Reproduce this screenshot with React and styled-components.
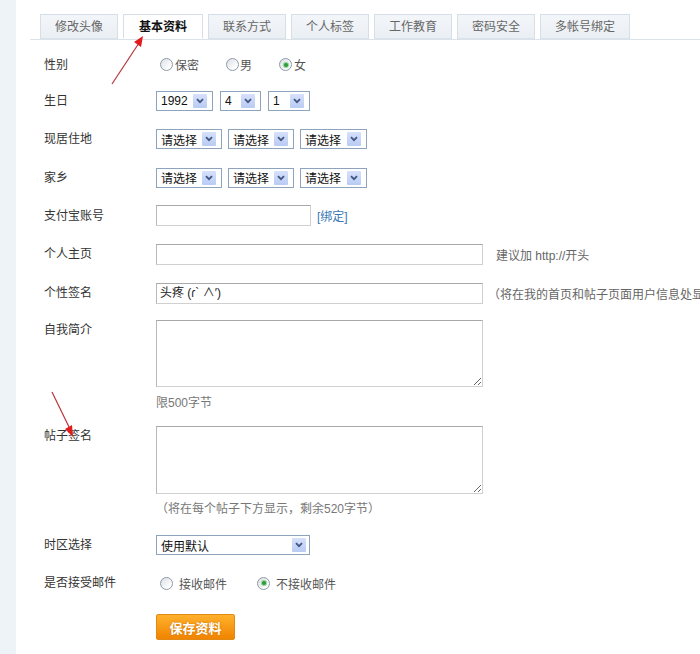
import styled, { createGlobalStyle } from 'styled-components';

const Global = createGlobalStyle`
  html, body {
    margin: 0;
    padding: 0;
    background: #fff;
    overflow: hidden;
  }
  body {
    font-family: "Liberation Sans", "Noto Sans CJK SC", sans-serif;
    font-size: 12px;
    color: #333;
  }
`;

const Page = styled.div`
  position: relative;
  display: flex;
  width: 700px;
  min-height: 654px;
`;

const SideStrip = styled.div`
  width: 16px;
  flex: none;
  background: #eef3f8;
`;

const Main = styled.div`
  flex: 1;
  padding-left: 14px;
  min-width: 0;
`;

const TabBar = styled.div`
  display: flex;
  gap: 5px;
  margin-top: 14px;
  padding-left: 10px;
  border-bottom: 1px solid #dbe3ea;
  height: 25px;
`;

const Tab = styled.div`
  height: 25px;
  box-sizing: border-box;
  padding: 0 ${p => (p.$active ? 15 : 14)}px;
  line-height: 24px;
  border: 1px solid #d6dfe7;
  border-bottom: ${p => (p.$active ? '1px solid #fff' : '1px solid #dbe3ea')};
  background: ${p => (p.$active ? '#fff' : 'linear-gradient(#f3f6f9, #eaeff4)')};
  color: ${p => (p.$active ? '#111' : '#666')};
  font-weight: ${p => (p.$active ? 'bold' : 'normal')};
  white-space: nowrap;
`;

const Form = styled.div`
  padding-left: 14px;
  padding-top: 6px;
`;

const Row = styled.div`
  display: flex;
  align-items: ${p => (p.$top ? 'flex-start' : 'center')};
  height: ${p => (p.$h ? `${p.$h}px` : 'auto')};
  margin-top: ${p => p.$mt || 0}px;
  white-space: nowrap;
`;

const Label = styled.div`
  width: 112px;
  flex: none;
  color: #333;
  line-height: 18px;
  padding-top: ${p => p.$pt || 0}px;
`;

const Controls = styled.div`
  display: flex;
  align-items: center;
  gap: ${p => p.$gap || 0}px;
`;

const RadioItem = styled.label`
  display: flex;
  align-items: center;
  margin-left: 4px;
  margin-right: ${p => p.$mr || 0}px;
  color: #555;
`;

const RadioDot = styled.span`
  position: relative;
  width: 13px;
  height: 13px;
  border-radius: 50%;
  border: 1px solid #8c9aa8;
  background: linear-gradient(135deg, #dcdfe4, #fff 80%);
  margin-right: ${p => p.$gap || 2}px;
  box-sizing: border-box;
  &::after {
    content: '';
    display: ${p => (p.$on ? 'block' : 'none')};
    position: absolute;
    left: 3.5px;
    top: 3.5px;
    width: 4px;
    height: 4px;
    border-radius: 50%;
    background: #2f9b3c;
    box-shadow: 0 0 1px 1px #8fd090;
  }
`;

const SelectBox = styled.div`
  display: flex;
  align-items: center;
  justify-content: space-between;
  width: ${p => p.$w}px;
  height: 20px;
  box-sizing: border-box;
  border: 1px solid #8ea4bc;
  background: #fff;
  padding-left: 4px;
  padding-right: ${p => p.$pr ?? 5}px;
  color: #111;
`;

const ArrowBtn = styled.span`
  display: flex;
  align-items: center;
  justify-content: center;
  width: 14px;
  height: 14px;
  background: linear-gradient(#d6e1fb, #b9cbf4);
  border-radius: 1px;
`;

const TextInput = styled.div`
  flex: none;
  width: ${p => p.$w}px;
  height: 21px;
  box-sizing: border-box;
  border: 1px solid #d0d0d0;
  border-top-color: #a8a8a8;
  border-left-color: #b8b8b8;
  padding-left: 3px;
  line-height: 19px;
  color: #222;
`;

const TextArea = styled.textarea`
  display: block;
  flex: none;
  width: 327px;
  height: ${p => p.$h}px;
  box-sizing: border-box;
  border: 1px solid #d0d0d0;
  border-top-color: #a8a8a8;
  border-left-color: #b8b8b8;
  margin: 0;
  padding: 2px;
  font: inherit;
  resize: both;
  outline: none;
`;

const Hint = styled.span`
  color: #666;
  margin-left: ${p => p.$ml || 0}px;
`;

const Note = styled.div`
  margin-left: 112px;
  margin-top: ${p => p.$mt || 0}px;
  line-height: 18px;
  color: #777;
`;

const BindLink = styled.span`
  color: #3b78b8;
  margin-left: 6px;
`;

const SaveButton = styled.button`
  display: block;
  margin-left: 112px;
  margin-top: 12px;
  width: 79px;
  height: 26px;
  border: 1px solid #e08a14;
  border-radius: 2px;
  background: linear-gradient(#ffb12d, #f08400);
  color: #fff;
  font-family: inherit;
  font-size: 13px;
  font-weight: bold;
  text-shadow: 0 0 2px #c96d00;
  padding: 0;
`;

const Overlay = styled.svg`
  position: absolute;
  left: 0;
  top: 0;
  pointer-events: none;
`;

const Chevron = () => (
  <svg width="8" height="6" viewBox="0 0 8 6">
    <path d="M1 1.2 L4 4.2 L7 1.2" fill="none" stroke="#3f5683" strokeWidth="1.8" />
  </svg>
);

const Select = ({ w, pr, children }) => (
  <SelectBox $w={w} $pr={pr}>
    <span>{children}</span>
    <ArrowBtn>
      <Chevron />
    </ArrowBtn>
  </SelectBox>
);

const Radio = ({ on, mr, gap, children }) => (
  <RadioItem $mr={mr}>
    <RadioDot $on={on} $gap={gap} />
    {children}
  </RadioItem>
);

const tabs = ['修改头像', '基本资料', '联系方式', '个人标签', '工作教育', '密码安全', '多帐号绑定'];

const Area = () => (
  <Controls $gap={6}>
    <Select w={66}>请选择</Select>
    <Select w={66}>请选择</Select>
    <Select w={67}>请选择</Select>
  </Controls>
);

export default function App() {
  return (
    <Page>
      <Global />
      <SideStrip />
      <Main>
        <TabBar>
          {tabs.map(t => (
            <Tab key={t} $active={t === '基本资料'}>{t}</Tab>
          ))}
        </TabBar>
        <Form>
          <Row $h={37}>
            <Label>性别</Label>
            <Controls>
              <Radio mr={23}>保密</Radio>
              <Radio mr={23} gap={1}>男</Radio>
              <Radio gap={2} on>女</Radio>
            </Controls>
          </Row>
          <Row $h={35}>
            <Label>生日</Label>
            <Controls $gap={7}>
              <Select w={57}>1992</Select>
              <Select w={41}>4</Select>
              <Select w={42}>1</Select>
            </Controls>
          </Row>
          <Row $h={38} $mt={2}>
            <Label>现居住地</Label>
            <Area />
          </Row>
          <Row $h={39}>
            <Label>家乡</Label>
            <Area />
          </Row>
          <Row $h={37}>
            <Label>支付宝账号</Label>
            <TextInput $w={155} />
            <BindLink>[绑定]</BindLink>
          </Row>
          <Row $h={40}>
            <Label>个人主页</Label>
            <TextInput $w={327} />
            <Hint $ml={13}>建议加 http://开头</Hint>
          </Row>
          <Row $h={38}>
            <Label>个性签名</Label>
            <TextInput $w={327}>头疼 (ɾ` ∧′)</TextInput>
            <Hint $ml={5}>（将在我的首页和帖子页面用户信息处显示）</Hint>
          </Row>
          <Row $top $mt={8}>
            <Label $pt={1}>自我简介</Label>
            <TextArea $h={67} readOnly />
          </Row>
          <Note $mt={7}>限500字节</Note>
          <Row $top $mt={14}>
            <Label $pt={1}>帖子签名</Label>
            <TextArea $h={68} readOnly />
          </Row>
          <Note $mt={6}>（将在每个帖子下方显示，剩余520字节）</Note>
          <Row $h={38} $mt={8}>
            <Label>时区选择</Label>
            <Select w={154} pr={3}>使用默认</Select>
          </Row>
          <Row $h={38}>
            <Label>是否接受邮件</Label>
            <Controls>
              <Radio mr={26} gap={6}>接收邮件</Radio>
              <Radio gap={6} on>不接收邮件</Radio>
            </Controls>
          </Row>
          <SaveButton>保存资料</SaveButton>
        </Form>
      </Main>
      <Overlay width="700" height="654" viewBox="0 0 700 654">
        <line x1="112" y1="84" x2="139" y2="43" stroke="#b8333a" strokeWidth="1.2" />
        <polygon points="143,36 141,47 134,42" fill="#e21b1b" />
        <line x1="52" y1="392" x2="70" y2="429" stroke="#b8333a" strokeWidth="1.2" />
        <polygon points="73,437 65,429 72,425" fill="#e21b1b" />
      </Overlay>
    </Page>
  );
}
